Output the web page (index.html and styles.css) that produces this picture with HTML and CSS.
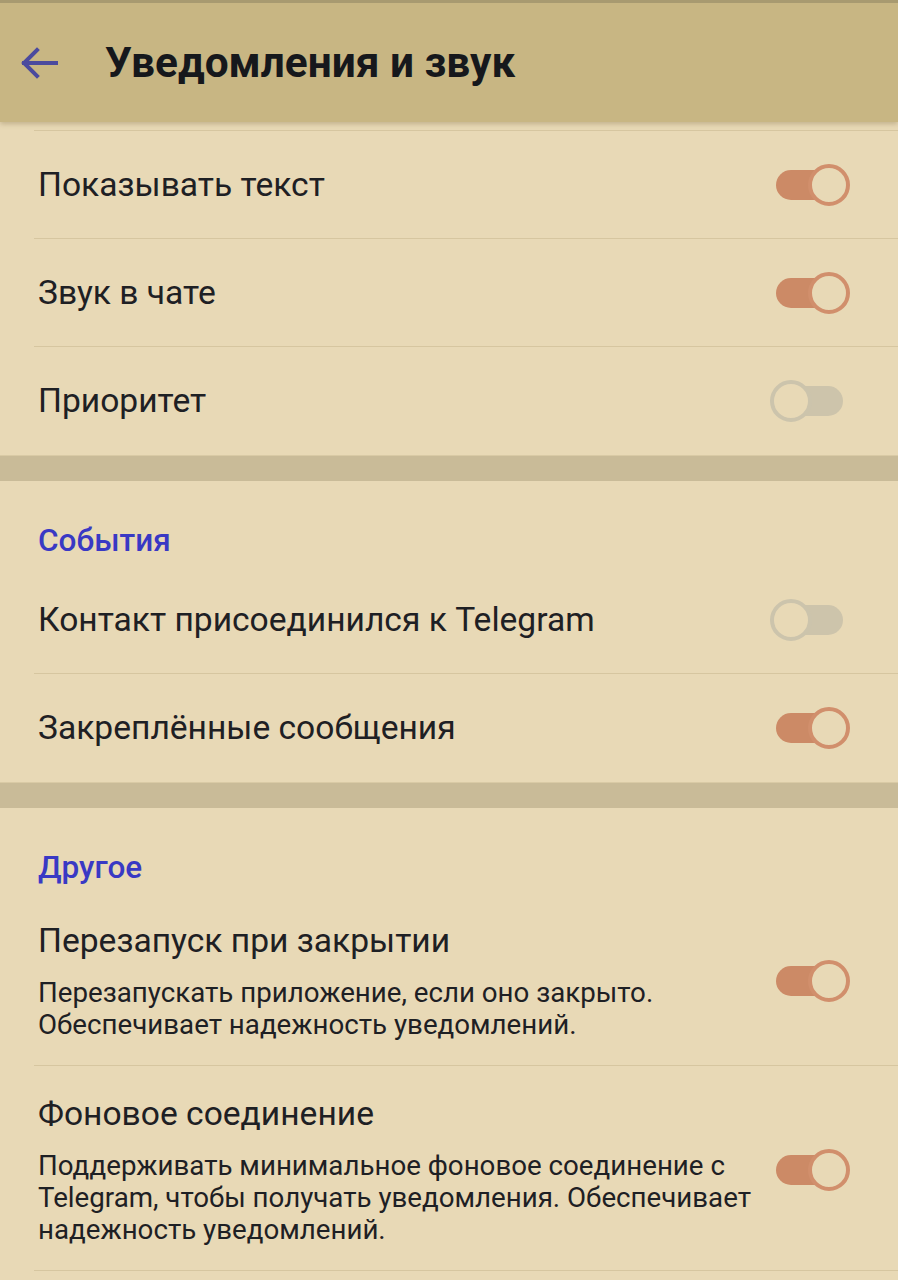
FILE: index.html
```html
<!DOCTYPE html>
<html lang="ru">
<head>
<meta charset="utf-8">
<title>Уведомления и звук</title>
<link rel="stylesheet" href="styles.css">
</head>
<body>
<header class="appbar">
  <svg class="back" width="40" height="34" viewBox="0 0 40 34">
    <path d="M37 17H5M18 4L5 17l13 13" fill="none" stroke="#4b4a9e" stroke-width="4" stroke-linecap="square" stroke-linejoin="miter"/>
  </svg>
  <h1 class="title">Уведомления и звук</h1>
</header>
<main>
  <section class="section first">
    <div class="row"><span class="label">Показывать текст</span><span class="toggle on"><span class="thumb"></span></span></div>
    <div class="row"><span class="label">Звук в чате</span><span class="toggle on"><span class="thumb"></span></span></div>
    <div class="row last"><span class="label">Приоритет</span><span class="toggle"><span class="thumb"></span></span></div>
  </section>
  <div class="band"></div>
  <section class="section">
    <div class="head">События</div>
    <div class="row"><span class="label">Контакт присоединился к Telegram</span><span class="toggle"><span class="thumb"></span></span></div>
    <div class="row last"><span class="label">Закреплённые сообщения</span><span class="toggle on"><span class="thumb"></span></span></div>
  </section>
  <div class="band"></div>
  <section class="section">
    <div class="head">Другое</div>
    <div class="row tall">
      <div class="text">
        <div class="label">Перезапуск при закрытии</div>
        <div class="sub">Перезапускать приложение, если оно закрыто. Обеспечивает надежность уведомлений.</div>
      </div>
      <span class="toggle on"><span class="thumb"></span></span>
    </div>
    <div class="row tall">
      <div class="text">
        <div class="label">Фоновое соединение</div>
        <div class="sub">Поддерживать минимальное фоновое соединение с Telegram, чтобы получать уведомления. Обеспечивает надежность уведомлений.</div>
      </div>
      <span class="toggle on"><span class="thumb"></span></span>
    </div>
  </section>
</main>
</body>
</html>
```
FILE: styles.css
```css
html, body {
  margin: 0;
  padding: 0;
  background: #e8d9b6;
  font-family: Roboto, "Noto Sans", "Liberation Sans", sans-serif;
  color: #1e2024;
}
.appbar {
  height: 119px;
  border-top: 3px solid #a89a70;
  background: #c8b683;
  display: flex;
  align-items: center;
  position: relative;
  z-index: 2;
  box-shadow: 0 2px 5px rgba(120, 100, 60, 0.35);
}
.back {
  margin-left: 19px;
}
.title {
  margin: 0 0 0 46px;
  font-size: 42.4px;
  font-weight: 700;
  color: #16181c;
}
.section {
  background: #e8d9b6;
}
.section.first {
  border-top: 1px solid #d6c6a0;
  margin-top: 8px;
  margin-left: 34px;
}
.section.first .row {
  margin-left: 0;
}
.band {
  height: 25px;
  background: #c9bb98;
  border-top: 1px solid #d9caa5;
}
.head {
  height: 85px;
  box-sizing: border-box;
  padding: 40px 0 0 38px;
  font-size: 31.5px;
  font-weight: 500;
  color: #3939c4;
  line-height: 40px;
}
.row {
  display: flex;
  align-items: center;
  justify-content: space-between;
  height: 108px;
  box-sizing: border-box;
  margin-left: 34px;
  padding-left: 4px;
  border-bottom: 1px solid #d6c6a0;
}
.row.last {
  border-bottom: none;
}
.row.tall {
  height: auto;
  padding-top: 28px;
  padding-bottom: 24px;
}
.label {
  font-size: 33.6px;
  line-height: 40px;
  color: #1e2024;
}
.text {
  flex: 1;
  max-width: 728px;
}
.sub {
  margin-top: 16px;
  font-size: 27.7px;
  line-height: 32px;
  color: #1e2024;
}
.toggle {
  position: relative;
  width: 80px;
  height: 42px;
  flex: none;
  margin-right: 48px;
}
.toggle::before {
  content: "";
  position: absolute;
  left: 6px;
  top: 6px;
  width: 67px;
  height: 30px;
  border-radius: 15px;
  background: #cdc4ab;
}
.toggle .thumb {
  position: absolute;
  top: 0;
  left: 0;
  width: 42px;
  height: 42px;
  box-sizing: border-box;
  border-radius: 50%;
  border: 4px solid #ccc4ac;
  background: #e8d9b6;
}
.toggle.on::before {
  background: #cc8a66;
}
.toggle.on .thumb {
  left: 38px;
  border-color: #d18f6c;
}
```
